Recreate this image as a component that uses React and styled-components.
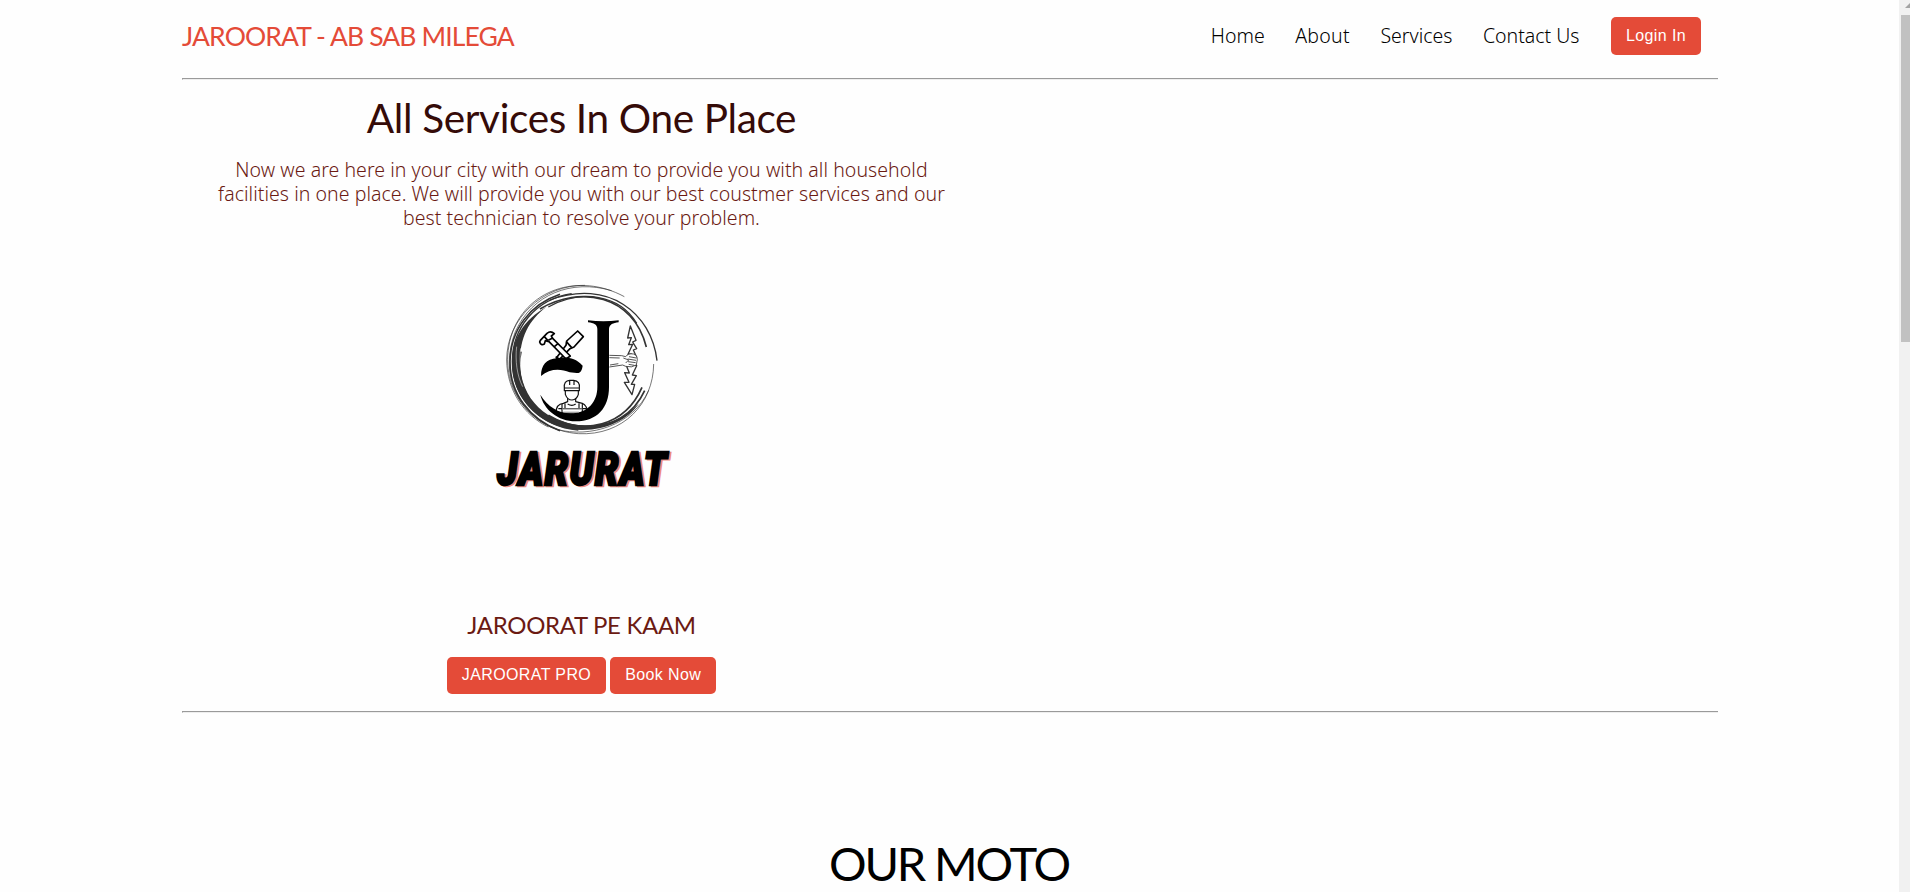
import React from "react";
import styled, { createGlobalStyle } from "styled-components";

const GlobalStyle = createGlobalStyle`
  * { box-sizing: border-box; }
  body { margin: 0; background: #fefefe; overflow: hidden; }
`;

const Page = styled.div`
  display: flex;
  height: 892px;
  overflow: hidden;
  color: #000;
  font-family: "Noto Sans", "Open Sans", sans-serif;
`;

const Main = styled.main`
  flex: 1;
  padding-left: 182px;
`;

const Container = styled.div`
  width: 1536px;
`;

const Header = styled.header`
  display: flex;
  align-items: center;
  justify-content: space-between;
  height: 78px;
  padding: 0 17px 6px 0;
`;

const Brand = styled.div`
  padding-bottom: 1px;
  color: #e44b38;
  font: 400 26.5px/32px Lato, sans-serif;
  letter-spacing: -0.89px;
  white-space: nowrap;
`;

const Nav = styled.nav`
  display: flex;
  align-items: center;
  gap: 30.5px;
`;

const NavLink = styled.a`
  font-size: 19.5px;
  font-weight: 300;
  line-height: 26px;
  letter-spacing: ${(p) => p.$tracking || 0}px;
  white-space: nowrap;

  &:last-of-type { margin-right: 1px; }
`;

const Button = styled.button`
  height: ${(p) => p.$height || 37}px;
  padding: 0 15px ${(p) => (p.$height ? 1 : 2)}px;
  border: 0;
  border-radius: 5px;
  background: #e44b38;
  color: #fff;
  font: 16px/20px "Liberation Sans", Arial, sans-serif;
  letter-spacing: 0.38px;
  white-space: nowrap;
`;

const Divider = styled.div`
  height: 2px;
  border-top: 1px solid #9a9a9a;
  border-bottom: 1px solid #eee;
  border-left: 1px solid #9a9a9a;
`;

const Hero = styled.section`
  display: flex;
  flex-direction: column;
  align-items: center;
  width: 799px;
  height: 631px;
  padding-top: 13px;
`;

const Title = styled.h1`
  margin: 0;
  color: #350b08;
  font: 400 40.5px/50px Lato, sans-serif;
  letter-spacing: -0.36px;
`;

const Intro = styled.p`
  margin: 15px 0 0;
  color: #6b1a12;
  font-size: 19.5px;
  font-weight: 300;
  line-height: 24px;
  letter-spacing: 0.05px;
  text-align: center;
`;

const Logo = styled.svg`
  display: block;
  width: 190px;
  height: 230px;
  margin: 40px 0 0 7px;
  overflow: visible;
`;

const Subtitle = styled.h3`
  margin: 110px 0 17px;
  color: #6b1a12;
  font: 400 24px/30px Lato, sans-serif;
  letter-spacing: -0.32px;
`;

const Actions = styled.div`
  display: flex;
  gap: 4px;
`;

const Motto = styled.h2`
  margin: 122px 2px 0 0;
  font: 400 47px/56px Lato, sans-serif;
  letter-spacing: -2.15px;
  text-align: center;
`;

const Scrollbar = styled.aside`
  width: 11px;
  padding-left: 2px;
  background: #f1f1f1;
`;

const ScrollArrow = styled.svg`
  display: block;
  width: 9px;
  height: 15px;
`;

const ScrollThumb = styled.div`
  height: 327px;
  background: #c1c1c1;
`;

function Emblem() {
  return (
    <Logo viewBox="0 0 570 690" fill="none" stroke="#333" aria-label="Jarurat">
      {/* brushed ring */}
      <path
        d="M170 110C100 150 66 205 66 278C66 394 160 478 275 480C350 481 415 449 447 400C405 445 350 468 288 466C170 463 91 386 90 278C89 204 116 150 170 110Z"
        fill="#333"
        stroke="none"
      />
      <path d="M403 80C265 5 105 60 63 200C20 350 120 480 265 491C400 498 490 400 491 282" strokeWidth="2" />
      <path d="M365 62C245 26 126 73 76 185C25 315 85 440 205 480" strokeWidth="2" />
      <path d="M285 46C160 44 50 145 50 270C51 360 100 435 175 471" strokeWidth="2" />
      <path d="M210 73C120 103 61 180 60 275C59 370 120 450 210 482" strokeWidth="5" />
      <path d="M245 71C135 88 67 175 67 275C67 382 150 471 265 480" strokeWidth="4" />
      <path d="M180 90C355 25 485 130 501 272" strokeWidth="4" />
      <path d="M150 117C270 45 430 75 469 231" strokeWidth="5" />
      <path d="M175 111C275 55 390 75 440 160" strokeWidth="4" />
      <path d="M93 245C65 370 165 474 280 474C365 474 432 432 464 362" strokeWidth="5" />
      <path d="M175 436C280 500 405 468 456 352" strokeWidth="5" />
      <path d="M200 478C300 505 430 466 476 361" strokeWidth="2" />
      <path d="M80 230C75 270 81 318 98 350M92 235C84 300 105 365 145 407" stroke="#fefefe" strokeWidth="1.5" />

      {/* screwdriver and hammer */}
      <g stroke="#000" strokeWidth="5" fill="#fefefe" strokeLinejoin="round">
        <path d="M263 183L280 200L252 231L240 236L208 269L199 264L228 226L230 213Z" />
        <path d="M229 215L245 233M197 260L211 269" />
        <path d="M151 211L171 190Q182 181 193 191L184 198L188 205L241 258L228 267L177 215L166 212L163 222Q153 228 149 216Z" />
        <path d="M163 200L174 212M175 211L188 204M193 230L204 221" />
      </g>
      <path
        d="M153 318C153 286 169 266 201 265C229 260 254 262 278 287C276 301 271 311 260 309L239 307C211 295 178 296 153 318Z"
        fill="#000"
        stroke="none"
      />

      {/* worker */}
      <g stroke="#111" strokeWidth="3.5" fill="#fefefe" strokeLinejoin="round">
        <path d="M198 429Q198 402 220 400L233 395V379L257 379V395L277 400Q292 407 292 429Z" />
        <path d="M226 362V373Q232 390 246 390Q261 388 265 373V362" />
        <path d="M223 354Q221 332 239 331H251Q271 333 268 354V362H223ZM222 354H269M239 332V345M252 332V345" />
        <path d="M216 402V429M277 402V429M225 400V416H267V400M216 416H277M233 402Q246 410 257 402M205 416H215M277 416H288" />
      </g>

      {/* letter mark */}
      <path
        d="M294 151Q340 157 386 151V157C369 159 358 163 357 177V351C357 414 321 454 257 454C204 454 161 418 151 374C173 410 206 430 242 430C294 430 322 395 322 351V177C322 164 312 159 294 157Z"
        fill="#000"
        stroke="none"
      />
      <path d="M216 417H277M220 426H267" stroke="#bbb" strokeWidth="3" />

      {/* fist with lightning bolt */}
      <g stroke="#333" strokeWidth="2.5" fill="#fefefe" strokeLinejoin="round">
        <path d="M421 168L438 211L428 216L440 236L430 240L440 262L430 284L440 287L427 315L439 317L424 343L434 343L426 374L403 337L417 337L404 308L418 309L408 284L424 252L414 253L428 223L416 224L424 203L413 204Z" strokeWidth="4" />
        <path d="M358 256L395 257L407 260Q414 249 431 252Q442 255 442 268L439 285Q425 294 407 289L398 285L358 291" />
        <path d="M358 263L389 264M360 285L385 281M400 264L416 270L407 279M417 260L439 264M413 267L438 271M414 275L437 278M416 283L433 286" />
      </g>

      {/* wordmark */}
      <g
        fontFamily="Roboto, Inter, sans-serif"
        fontSize="140"
        fontWeight="900"
        fontStyle="italic"
        letterSpacing="6"
      >
        <text x="28" y="648" textLength="512" lengthAdjust="spacingAndGlyphs" fill="#ed8b80" stroke="#ed8b80" strokeWidth="8">JARURAT</text>
        <text x="22" y="644" textLength="512" lengthAdjust="spacingAndGlyphs" fill="#000" stroke="#000" strokeWidth="8">JARURAT</text>
      </g>
    </Logo>
  );
}

export default function App() {
  return (
    <Page>
      <GlobalStyle />
      <Main>
        <Container>
          <Header>
            <Brand>JAROORAT - AB SAB MILEGA</Brand>
            <Nav>
              <NavLink>Home</NavLink>
              <NavLink $tracking={0.3}>About</NavLink>
              <NavLink>Services</NavLink>
              <NavLink>Contact Us</NavLink>
              <Button $height={38}>Login In</Button>
            </Nav>
          </Header>
          <Divider />
          <Hero>
            <Title>All Services In One Place</Title>
            <Intro>
              Now we are here in your city with our dream to provide you with all household
              <br />
              facilities in one place. We will provide you with our best coustmer services and our
              <br />
              best technician to resolve your problem.
            </Intro>
            <Emblem />
            <Subtitle>JAROORAT PE KAAM</Subtitle>
            <Actions>
              <Button>JAROORAT PRO</Button>
              <Button>Book Now</Button>
            </Actions>
          </Hero>
          <Divider />
          <Motto>OUR MOTO</Motto>
        </Container>
      </Main>
      <Scrollbar>
        <ScrollArrow viewBox="0 0 9 15">
          <path d="M4 8L9 3V8Z" fill="#a3a3a3" />
        </ScrollArrow>
        <ScrollThumb />
      </Scrollbar>
    </Page>
  );
}
